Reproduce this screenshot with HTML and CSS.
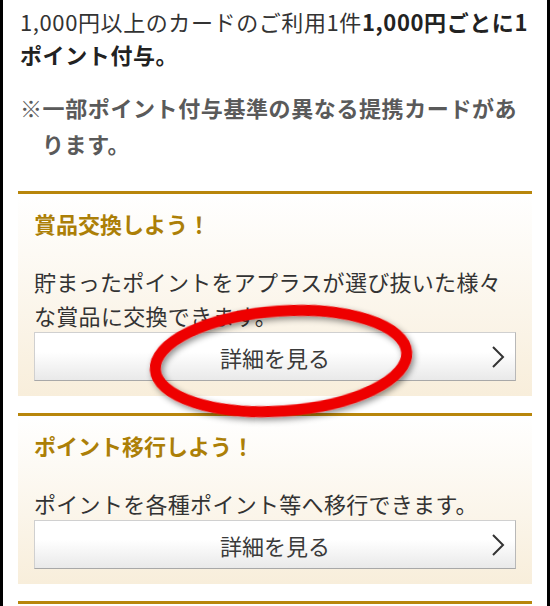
FILE: index.html
```html
<!DOCTYPE html>
<html lang="ja">
<head>
  <meta charset="UTF-8">
  <meta name="viewport" content="width=device-width, initial-scale=1.0">
  <title>ポイント</title>
  <link rel="stylesheet" href="styles.css">
</head>
<body>
  <div class="page">
    <p class="lead">1,000円以上のカードのご利用1件<strong>1,000円ごとに1ポイント付与。</strong></p>
    <p class="note">※一部ポイント付与基準の異なる提携カードがあります。</p>

    <div class="box">
      <h2>賞品交換しよう！</h2>
      <p>貯まったポイントをアプラスが選び抜いた様々な賞品に交換できます。</p>
      <a class="more" href="#">詳細を見る
        <svg class="chev" width="14" height="24" viewBox="0 0 14 24"><polyline points="2,2 12,12 2,22" fill="none" stroke="#333" stroke-width="2"/></svg>
      </a>
    </div>

    <div class="box">
      <h2>ポイント移行しよう！</h2>
      <p>ポイントを各種ポイント等へ移行できます。</p>
      <a class="more" href="#">詳細を見る
        <svg class="chev" width="14" height="24" viewBox="0 0 14 24"><polyline points="2,2 12,12 2,22" fill="none" stroke="#333" stroke-width="2"/></svg>
      </a>
    </div>

    <div class="box"></div>
  </div>

  <!-- 赤丸の書き込み -->
  <svg class="mark" width="300" height="140" viewBox="0 0 300 140">
    <defs>
      <filter id="sh" x="-20%" y="-20%" width="140%" height="140%">
        <feDropShadow dx="2" dy="3" stdDeviation="3" flood-color="#000" flood-opacity="0.45"/>
      </filter>
    </defs>
    <ellipse cx="150" cy="71" rx="126" ry="50" transform="rotate(-4 150 71)" fill="none" stroke="#ee0000" stroke-width="11" filter="url(#sh)"/>
  </svg>
</body>
</html>
```

FILE: styles.css
```css
body, html {
  margin: 0;
  padding: 0;
  height: 100%;
  overflow: hidden;
  background-color: #ffffff;
}

body {
  border-left: 3px solid #000;
  border-right: 3px solid #000;
  box-sizing: border-box;
  position: relative;
  font-family: "Noto Sans CJK JP", "Noto Sans", sans-serif;
  color: #333;
}

.page {
  padding: 5px 15px 0 15px;
}

.lead {
  margin: 0 0 0 2px;
  font-size: 22px;
  line-height: 33px;
  letter-spacing: 0.6px;
}

.lead strong {
  color: #222;
}

.note {
  margin: 18px 0 0 2px;
  padding-left: 22px;
  text-indent: -22px;
  font-size: 22px;
  line-height: 36px;
  letter-spacing: 0.6px;
  font-weight: bold;
  color: #5a5a5a;
}

.box {
  margin-top: 30px;
  border-top: 3px solid #b8860b;
  background: linear-gradient(#ffffff, #f8eedb);
  padding: 13px 16px 15px 16px;
}

.box + .box {
  margin-top: 17px;
}

.box h2 {
  margin: 0;
  font-size: 22px;
  line-height: 33px;
  color: #ac7f07;
}

.box p {
  margin: 24px 0 0 0;
  font-size: 22px;
  line-height: 34px;
  letter-spacing: 0.3px;
  color: #333;
}

.more {
  display: flex;
  align-items: center;
  justify-content: center;
  position: relative;
  height: 47px;
  background: linear-gradient(#ffffff 40%, #e9e9e9);
  border: 1px solid #d0d0d0;
  border-bottom-color: #a8a8a8;
  border-right-color: #b8b8b8;
  color: #3a3a3a;
  font-size: 22px;
  text-decoration: none;
}

.chev {
  position: absolute;
  right: 10px;
  top: 12px;
}

.mark {
  position: absolute;
  left: 128px;
  top: 290px;
}
```
